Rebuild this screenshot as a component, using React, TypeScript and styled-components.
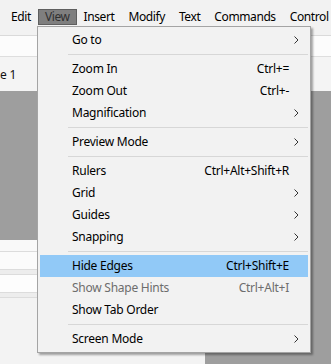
import React from "react";
import styled, { createGlobalStyle, css } from "styled-components";

const GlobalStyle = createGlobalStyle`
  html, body { margin: 0; padding: 0; }
  body { font-family: "Noto Sans", "Open Sans", sans-serif; font-size: 12px; }
`;

const FONT = `"Noto Sans", "Open Sans", sans-serif`;

const Window = styled.div`
  position: relative;
  width: 331px;
  height: 364px;
  overflow: hidden;
  display: flex;
  flex-direction: column;
  background: #f3f3f3;
  font-family: ${FONT};
  font-size: 12px;
  color: #000;
`;

const MenuBar = styled.div`
  height: 36px;
  flex: none;
  display: flex;
  align-items: flex-start;
  padding: 9px 0 0 4px;
  box-sizing: border-box;
  background: #f2f2f2;
  border-bottom: 1px solid #dadada;
`;

const MenuBarItem = styled.div<{ $active?: boolean }>`
  height: 16px;
  line-height: 14px;
  padding: 0 6px;
  border: 1px solid transparent;
  box-sizing: border-box;
  white-space: nowrap;
  letter-spacing: -0.4px;
  color: #000;
  ${(p) =>
    p.$active &&
    css`
      background: #7f7f7f;
      border-color: #5f5f5f;
      color: #303030;
    `}
`;

const ToolStrip = styled.div`
  height: 20px;
  flex: none;
  background: #fcfcfc;
  border-bottom: 1px solid #dedede;
`;

const TabRow = styled.div`
  height: 34px;
  flex: none;
  display: flex;
  align-items: center;
  background: #f4f4f4;
`;

const Tab = styled.div`
  padding-top: 1px;
  color: #111;
  white-space: nowrap;
  letter-spacing: -0.2px;
`;

const Workspace = styled.div`
  flex: 1;
  display: grid;
  grid-template-columns: 205px 1fr;
  grid-template-rows: 149px 1fr;
`;

const Canvas = styled.div`
  grid-row: 1 / 3;
  grid-column: 2;
  background: #9e9e9e;
`;

const CanvasLeft = styled.div`
  grid-row: 1;
  grid-column: 1;
  background: #9e9e9e;
`;

const Panel = styled.div`
  grid-row: 2;
  grid-column: 1;
  display: flex;
  flex-direction: column;
  background: #f3f3f3;
`;

const PanelRow = styled.div<{ $h: number; $bg: string }>`
  height: ${(p) => p.$h}px;
  flex: none;
  background: ${(p) => p.$bg};
  border-bottom: 1px solid #dcdcdc;
  box-sizing: border-box;
`;

const Menu = styled.div`
  position: absolute;
  left: 37px;
  top: 26px;
  width: 274px;
  padding: 2px;
  box-sizing: border-box;
  background: #f2f2f2;
  border: 1px solid #a4a4a4;
  box-shadow: 2px 2px 2px rgba(0, 0, 0, 0.35);
  display: flex;
  flex-direction: column;
`;

const Item = styled.div<{ $highlight?: boolean; $disabled?: boolean }>`
  height: 22px;
  display: grid;
  grid-template-columns: 1fr auto 19px;
  align-items: center;
  padding-left: 32px;
  box-sizing: border-box;
  letter-spacing: -0.25px;
  color: ${(p) => (p.$disabled ? "#6d6d6d" : "#000")};
  background: ${(p) => (p.$highlight ? "#91c9f7" : "transparent")};
  white-space: nowrap;
`;

const Label = styled.span`
  line-height: 22px;
`;

const Shortcut = styled.span`
  line-height: 22px;
  text-align: right;
`;

const Arrow = styled.span`
  display: flex;
  align-items: center;
  padding-left: 5px;
  height: 22px;
`;

const Separator = styled.div`
  height: 7px;
  flex: none;
  display: flex;
  align-items: center;
  padding-left: 28px;
  &::after {
    content: "";
    display: block;
    flex: 1;
    height: 1px;
    background: #d7d7d7;
  }
`;

const Chevron = () => (
  <svg width="5" height="8" viewBox="0 0 5 8">
    <polyline points="0.5,0.5 4,4 0.5,7.5" fill="none" stroke="#333" strokeWidth="1" />
  </svg>
);

type Entry =
  | { sep: true }
  | { label: string; shortcut?: string; sub?: boolean; highlight?: boolean; disabled?: boolean };

const entries: Entry[] = [
  { label: "Go to", sub: true },
  { sep: true },
  { label: "Zoom In", shortcut: "Ctrl+=" },
  { label: "Zoom Out", shortcut: "Ctrl+-" },
  { label: "Magnification", sub: true },
  { sep: true },
  { label: "Preview Mode", sub: true },
  { sep: true },
  { label: "Rulers", shortcut: "Ctrl+Alt+Shift+R" },
  { label: "Grid", sub: true },
  { label: "Guides", sub: true },
  { label: "Snapping", sub: true },
  { sep: true },
  { label: "Hide Edges", shortcut: "Ctrl+Shift+E", highlight: true },
  { label: "Show Shape Hints", shortcut: "Ctrl+Alt+I", disabled: true },
  { label: "Show Tab Order" },
  { sep: true },
  { label: "Screen Mode", sub: true },
];

const menuBarItems = ["Edit", "View", "Insert", "Modify", "Text", "Commands", "Control"];

export default function App() {
  return (
    <>
      <GlobalStyle />
      <Window>
        <MenuBar>
          {menuBarItems.map((m) => (
            <MenuBarItem key={m} $active={m === "View"}>
              {m}
            </MenuBarItem>
          ))}
        </MenuBar>
        <ToolStrip />
        <TabRow>
          <Tab>e 1</Tab>
        </TabRow>
        <Workspace>
          <CanvasLeft />
          <Canvas />
          <Panel>
            <PanelRow $h={12} $bg="#f9f9f9" />
            <PanelRow $h={18} $bg="#fbfbfb" />
            <PanelRow $h={5} $bg="#ededed" />
            <PanelRow $h={18} $bg="#fdfdfd" />
            <PanelRow $h={5} $bg="#ededed" />
          </Panel>
        </Workspace>
        <Menu>
          {entries.map((e, i) =>
            "sep" in e ? (
              <Separator key={i} />
            ) : (
              <Item key={i} $highlight={e.highlight} $disabled={e.disabled}>
                <Label>{e.label}</Label>
                <Shortcut>{e.shortcut ?? ""}</Shortcut>
                <Arrow>{e.sub ? <Chevron /> : null}</Arrow>
              </Item>
            )
          )}
        </Menu>
      </Window>
    </>
  );
}
